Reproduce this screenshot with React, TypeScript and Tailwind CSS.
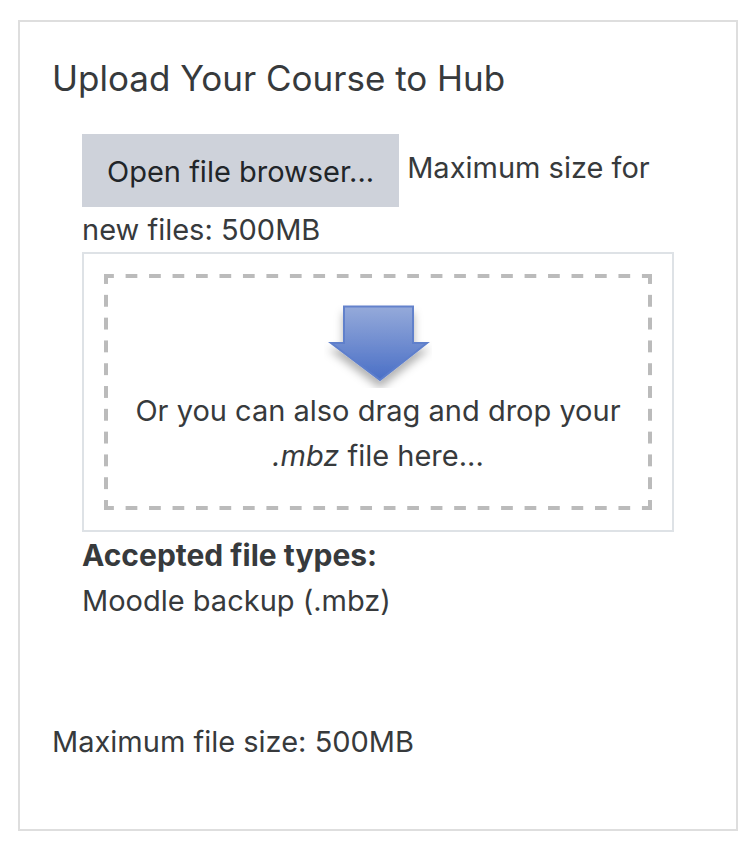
import { useId } from "react";

function DownArrow() {
  const id = useId();
  return (
    <svg viewBox="0 0 108 86" className="h-[86px] w-[108px]" aria-hidden="true">
      <defs>
        <linearGradient id={`${id}-fill`} x1="0" y1="0" x2="0" y2="1">
          <stop offset="0" stopColor="#95aada" />
          <stop offset="1" stopColor="#4a6fc6" />
        </linearGradient>
        <linearGradient id={`${id}-edge`} x1="0" y1="0" x2="0" y2="1">
          <stop offset="0" stopColor="#6382cb" />
          <stop offset="1" stopColor="#5b7dcc" />
        </linearGradient>
        <filter id={`${id}-shadow`} x="-20%" y="-20%" width="140%" height="150%">
          <feDropShadow dx="0" dy="7" stdDeviation="4" floodColor="#000" floodOpacity="0.3" />
        </filter>
      </defs>
      <path
        d="M20 4.5H89V41H103L56 78L7 41H20Z"
        fill={`url(#${id}-fill)`}
        stroke={`url(#${id}-edge)`}
        strokeWidth="2"
        filter={`url(#${id}-shadow)`}
      />
    </svg>
  );
}

function FilePicker() {
  return (
    <div className="mx-[30px]">
      <p>
        <button type="button" className="mr-2 h-[73px] bg-[#ced2da] px-[25px] pt-[2px] align-middle text-[#212529]">
          Open file browser...
        </button>
        Maximum size for new files: 500MB
      </p>
      <div className="border-2 border-[#dee2e6] p-5">
        {/* wide dashes: two tiled gradients per axis, drawn under a transparent border */}
        <div className="flex flex-col items-center border-4 border-transparent [background-image:linear-gradient(90deg,#bbb_25%,transparent_25%_75%,#bbb_75%),linear-gradient(#bbb_25%,transparent_25%_75%,#bbb_75%),linear-gradient(90deg,#bbb_25%,transparent_25%_75%,#bbb_75%),linear-gradient(#bbb_25%,transparent_25%_75%,#bbb_75%)] [background-position:0_-4px,-4px_0,0_calc(100%+4px),calc(100%+4px)_0] [background-repeat:round_no-repeat,no-repeat_round] [background-size:23px_4px,4px_23px] px-5 pt-6 pb-7 text-center">
          <DownArrow />
          <p>
            Or you can also drag and drop your <em>.mbz</em> file here...
          </p>
        </div>
      </div>
      <p className="pt-px text-[30px] font-bold">Accepted file types:</p>
      <p>Moodle backup (.mbz)</p>
    </div>
  );
}

export default function App() {
  return (
    <main className="bg-white py-5 pr-3 pl-[18px] font-['Inter',sans-serif] text-[29px] leading-[45px] text-[#373a3c]">
      <section className="border-2 border-[#dedede] px-8 pt-8 pb-[65px]">
        <h1 className="mb-8 text-[35px] leading-[48px]">Upload Your Course to Hub</h1>
        <FilePicker />
        <p className="mt-24">Maximum file size: 500MB</p>
      </section>
    </main>
  );
}
